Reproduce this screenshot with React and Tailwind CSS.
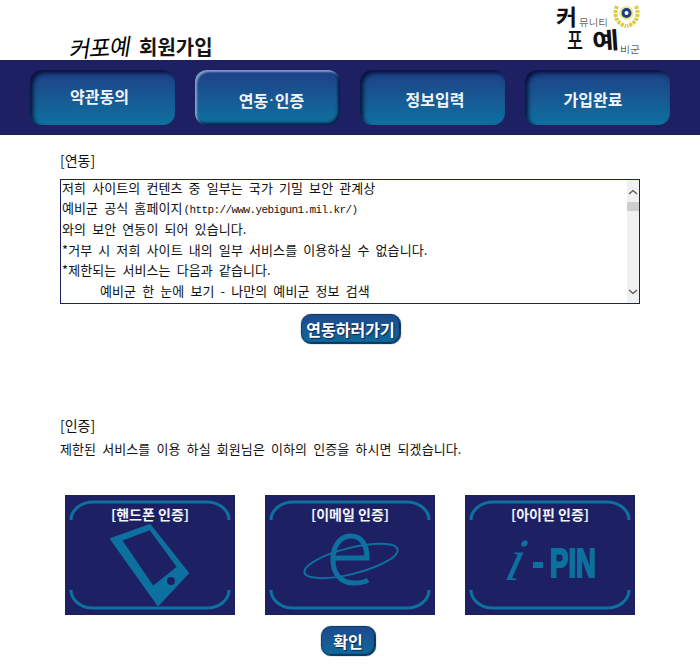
const KR = "font-['Noto_Sans_CJK_KR',sans-serif]";

const TABS = [
  { label: "약관동의", pad: "pb-[4px] pr-[6px]", active: false },
  { label: "연동·인증", pad: "pt-[4px] pl-[8px]", active: true },
  { label: "정보입력", pad: "pt-[2px] pl-[5px]", active: false },
  { label: "가입완료", pad: "pt-[2px] pr-[9px]", active: false },
];

const TERMS = [
  "와의 보안 연동이 되어 있습니다.",
  "*거부 시 저희 사이트 내의 일부 서비스를 이용하실 수 없습니다.",
  "*제한되는 서비스는 다음과 같습니다.",
];

function Logo() {
  return (
    <svg width="90" height="60" viewBox="0 0 90 60" className="mr-[55px] overflow-visible">
      <g fill="#111" fontFamily="'Noto Sans CJK KR', sans-serif">
        <text x="1" y="25" fontSize="22" fontWeight="700" textLength="21" lengthAdjust="spacingAndGlyphs">커</text>
        <text x="24" y="26" fontSize="9.5" fontWeight="300" textLength="29" lengthAdjust="spacingAndGlyphs">뮤니티</text>
        <text x="12" y="49" fontSize="24" fontWeight="500" textLength="16" lengthAdjust="spacingAndGlyphs">포</text>
        <text x="37" y="49" fontSize="23" fontWeight="700" textLength="27" lengthAdjust="spacingAndGlyphs" transform="rotate(-4 50 40)">예</text>
        <text x="65" y="53" fontSize="9.5" fontWeight="300" textLength="20" lengthAdjust="spacingAndGlyphs">비군</text>
      </g>
      <g fill="none" stroke="#dccb45" strokeWidth="4" strokeDasharray="3 1">
        <path d="M62 6 C58 16 62 24 71 26" />
        <path d="M81 6 C85 16 81 24 72 26" />
      </g>
      <circle cx="71.5" cy="13" r="7" fill="#f0e68c" />
      <circle cx="71.5" cy="13" r="5" fill="#1c3f86" />
      <circle cx="71.5" cy="13" r="2" fill="#fff" />
    </svg>
  );
}

function Tab({ label, pad, active }) {
  const look = active
    ? "shadow-[inset_2px_2px_2px_rgba(190,205,230,0.65),inset_-2px_-2px_3px_rgba(5,10,50,0.85)]"
    : "shadow-[inset_3px_3px_4px_rgba(5,10,50,0.9)]";
  const [head, tail] = label.split("·");
  return (
    <div
      className={`flex h-[55px] w-[145px] items-center justify-center rounded-[12px] bg-gradient-to-b from-[#1c3f86] to-[#0d719f] text-[16px] font-bold text-[#f2f5fa] ${look} ${pad}`}
    >
      {tail ? (
        <>
          <span>{head}</span>
          <span className="text-[11px]">·</span>
          <span>{tail}</span>
        </>
      ) : (
        label
      )}
    </div>
  );
}

function ScrollBar() {
  return (
    <div className="flex w-[12px] shrink-0 flex-col items-center bg-[#f1f1f1]">
      <svg width="10" height="6" viewBox="0 0 10 6" className="mt-[9px]">
        <path d="M1 5 L5 1.5 L9 5" fill="none" stroke="#555" strokeWidth="1.3" />
      </svg>
      <div className="mt-[7px] h-[9px] w-full bg-[#cdcdcd]" />
      <svg width="10" height="6" viewBox="0 0 10 6" className="mt-auto mb-[8px]">
        <path d="M1 1 L5 4.5 L9 1" fill="none" stroke="#555" strokeWidth="1.3" />
      </svg>
    </div>
  );
}

function SmallButton({ label, size, className }) {
  return (
    <div
      className={`flex h-[30px] items-center justify-center rounded-[10px] border border-[#123a6b] bg-gradient-to-b from-[#1c4a8c] to-[#0d6a9b] text-[16px] font-bold text-white shadow-[inset_-1px_-1px_1px_rgba(5,15,50,0.6),0_0_1px_#0b2a55] [text-shadow:1px_1px_1px_#0b2452] ${size} ${className || ""}`}
    >
      {label}
    </div>
  );
}

function AuthCard({ title, children }) {
  return (
    <div className="relative flex h-[120px] w-[170px] flex-col items-center bg-[#1e2064] pt-[9px]">
      <svg width="170" height="120" viewBox="0 0 170 120" className="absolute top-0 left-0">
        <g fill="none" stroke="#0d719f" strokeWidth="3">
          <path d="M6 25 A 22 18 0 0 1 28 7 H142 A 22 18 0 0 1 164 25" />
          <path d="M6 95 A 22 18 0 0 0 28 113 H142 A 22 18 0 0 0 164 95" />
        </g>
        {children}
      </svg>
      <div className="relative text-[14px] leading-[20px] font-bold text-[#f2f5fa]">{title}</div>
    </div>
  );
}

export default function App() {
  return (
    <div className={`min-h-[670px] w-[700px] bg-white text-[#111] ${KR}`}>
      <header className="flex h-[60px] items-stretch justify-between pl-[70px]">
        <div className="flex items-end">
          <span className="mb-[-2px] w-[69px] origin-left -rotate-3 -skew-x-12 text-[23px] leading-[28px] font-normal tracking-[-1px] text-black">
            커포예
          </span>
          <span className="mb-[-1px] text-[20px] leading-[28px] font-bold text-[#151515]">회원가입</span>
        </div>
        <Logo />
      </header>

      <nav className="flex h-[75px] gap-[20px] bg-[#1e2064] pt-[10px] pl-[30px]">
        {TABS.map((t) => (
          <Tab key={t.label} {...t} />
        ))}
      </nav>

      <main className="px-[60px]">
        <h2 className="mt-[15px] h-[20px] text-[14px] leading-[20px] font-normal">[연동]</h2>
        <div className="mt-[9px] flex h-[125px] overflow-hidden border border-[#1e2064]">
          <div className="flex-1 pl-[1px] text-[13px] leading-[20.8px] tracking-[0.1px] whitespace-nowrap [word-spacing:3px]">
            <div className="mb-[2px] leading-[16px]">저희 사이트의 컨텐츠 중 일부는 국가 기밀 보안 관계상</div>
            <div>
              예비군 공식 홈페이지
              <span className="ml-[1px] font-['Liberation_Mono',monospace] text-[11px] leading-none tracking-[-0.6px]">
                (http://www.yebigun1.mil.kr/)
              </span>
            </div>
            {TERMS.map((line) => (
              <div key={line}>{line}</div>
            ))}
            <div className="pl-[38px]">예비군 한 눈에 보기 - 나만의 예비군 정보 검색</div>
          </div>
          <ScrollBar />
        </div>
        <div className="mt-[10px] flex justify-center pl-[1px]">
          <SmallButton label="연동하러가기" size="w-[100px]" />
        </div>

        <h2 className="mt-[71px] h-[20px] text-[14px] leading-[20px] font-normal">[인증]</h2>
        <p className="mt-[4px] h-[20px] text-[13px] leading-[20px] tracking-[0.1px] [word-spacing:3px]">
          제한된 서비스를 이용 하실 회원님은 이하의 인증을 하시면 되겠습니다.
        </p>

        <div className="mt-[36px] flex gap-[30px] px-[5px]">
          <AuthCard title="[핸드폰 인증]">
            <path
              fillRule="evenodd"
              fill="#0d719f"
              stroke="#0d719f"
              strokeWidth="2"
              strokeLinejoin="round"
              d="M46 44 L85 30 L123 78 L93 110 Z M56 45 L85 34 L113 72 L88 92 Z"
            />
            <circle cx="106" cy="86" r="4" fill="#1e2064" />
          </AuthCard>
          <AuthCard title="[이메일 인증]">
            <path
              d="M69 63 H102 C102 48 95 41 86 41 C74 41 68 52 68 65 C68 79 76 88 89 88 C95 88 100 87 103 85"
              fill="none"
              stroke="#0d719f"
              strokeWidth="5"
            />
            <ellipse
              cx="86"
              cy="66"
              rx="48"
              ry="13"
              transform="rotate(-14 86 66)"
              fill="none"
              stroke="#0d719f"
              strokeWidth="2"
            />
          </AuthCard>
          <AuthCard title="[아이핀 인증]">
            <text
              transform="translate(38 85) skewX(-15)"
              fontSize="60"
              fontStyle="italic"
              fontFamily="'Liberation Serif', serif"
              fill="#0d719f"
            >
              i
            </text>
            <rect x="68" y="67" width="10" height="6" fill="#0d719f" />
            <text
              x="85"
              y="82"
              fontSize="41"
              fontWeight="700"
              fontFamily="'Liberation Sans', sans-serif"
              fill="#0d719f"
              stroke="#0d719f"
              strokeWidth="2"
              textLength="46"
              lengthAdjust="spacingAndGlyphs"
            >
              PIN
            </text>
          </AuthCard>
        </div>

        <div className="mt-[11px] flex justify-center">
          <SmallButton label="확인" size="w-[55px]" className="ml-[-4px]" />
        </div>
      </main>
    </div>
  );
}
